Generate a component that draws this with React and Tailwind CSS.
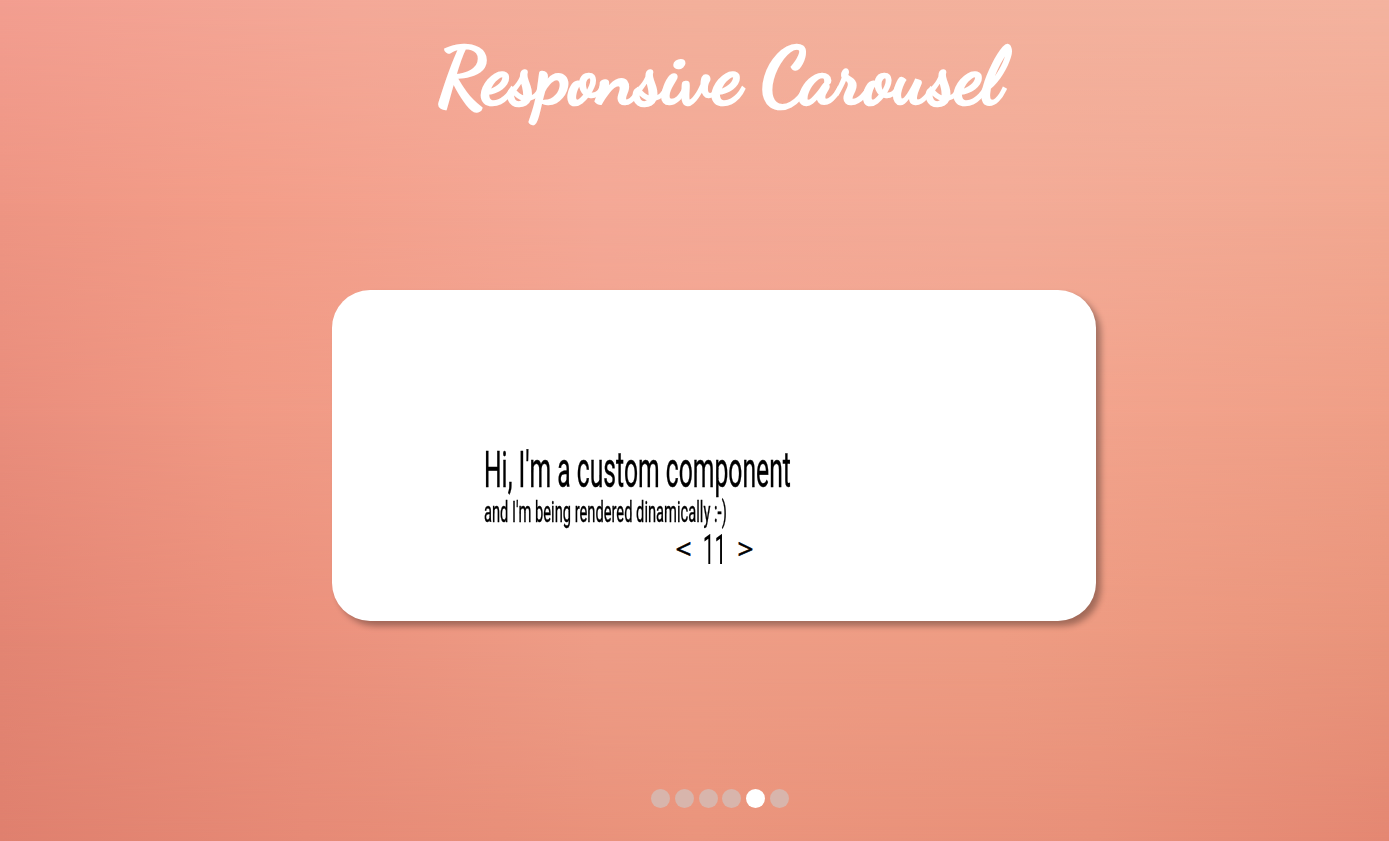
import React, { useState } from "react";

const slides = [0, 1, 2, 3, 4, 5];

function Backdrop() {
  return (
    <div className="absolute inset-0 -z-10 bg-[linear-gradient(90deg,#f39e90_0%,#f4a998_25%,#f3b09b_50%,#f4b39f_100%)]">
      <div className="absolute inset-0 bg-[linear-gradient(90deg,#ee9583_0%,#f39d88_17%,#f4a896_43%,#f3ab97_72%,#f2a891_100%)] [mask-image:linear-gradient(transparent_0%,black_25%)]" />
      <div className="absolute inset-0 bg-[linear-gradient(90deg,#e98d7c_0%,#f09984_17%,#f3a490_50%,#f2a38c_79%,#ef9e86_100%)] [mask-image:linear-gradient(transparent_25%,black_50%)]" />
      <div className="absolute inset-0 bg-[linear-gradient(90deg,#e38573_0%,#ea8e7a_17%,#ee9d87_43%,#ee9c83_72%,#e9947b_100%)] [mask-image:linear-gradient(transparent_50%,black_76%)]" />
      <div className="absolute inset-0 bg-[linear-gradient(90deg,#df806e_0%,#e68a76_22%,#ea947c_50%,#e89079_79%,#e48772_100%)] [mask-image:linear-gradient(transparent_76%,black_100%)]" />
    </div>
  );
}

export default function App() {
  const [active, setActive] = useState(4);
  const [count, setCount] = useState(11);

  return (
    <main className="relative isolate flex h-[841px] w-full flex-col overflow-hidden">
      <Backdrop />
      <header className="ml-[437px] flex h-[290px] w-[573px] shrink-0 pt-[28px]">
        <h1 className="h-[96px] origin-left scale-x-[0.976] whitespace-nowrap font-['Dancing_Script',cursive] text-[80px] leading-[96px] font-bold text-white [-webkit-text-stroke:2.6px_white]">
          Responsive Carousel
        </h1>
      </header>

      <section className="ml-[332px] flex h-[331px] w-[764px] shrink-0 flex-col rounded-[38px] bg-white px-[152px] pt-[155px] text-black shadow-[5px_5px_6px_rgba(0,0,0,0.32)]">
        <h2 className="h-[51px] w-[632px] origin-left scale-x-[0.494] whitespace-nowrap font-['Roboto',sans-serif] text-[50px] leading-[50px] font-normal [-webkit-text-stroke:0.4px_black]">
          Hi, I'm a custom component
        </h2>
        <p className="mt-[2px] h-[28px] w-[478px] origin-left scale-x-[0.507] whitespace-nowrap font-['Roboto',sans-serif] text-[29px] leading-[28px] font-normal [-webkit-text-stroke:0.4px_black]">
          and I'm being rendered dinamically :-)
        </p>
        <div className="flex h-[44px] items-center justify-center gap-[12px] pl-px font-['Open_Sans',sans-serif]">
          <button className="w-[16px] text-[28px] leading-[40px] font-medium [-webkit-text-stroke:0.6px_black]" onClick={() => setCount(count - 1)}>&lt;</button>
          <span className="flex w-[22px] justify-center pt-[3px] font-['Roboto',sans-serif] text-[42px] leading-[44px]">
            <span className="scale-x-[0.5]">{count}</span>
          </span>
          <button className="w-[16px] text-[28px] leading-[40px] font-medium [-webkit-text-stroke:0.6px_black]" onClick={() => setCount(count + 1)}>&gt;</button>
        </div>
      </section>

      <nav className="mt-[168px] ml-[651px] flex gap-[4.8px]">
        {slides.map((i) => (
          <button
            key={i}
            aria-label={`Slide ${i + 1}`}
            onClick={() => setActive(i)}
            className={i === active ? "size-[19px] rounded-full bg-white" : "size-[19px] rounded-full bg-[#d8b5ac]"}
          />
        ))}
      </nav>
    </main>
  );
}
